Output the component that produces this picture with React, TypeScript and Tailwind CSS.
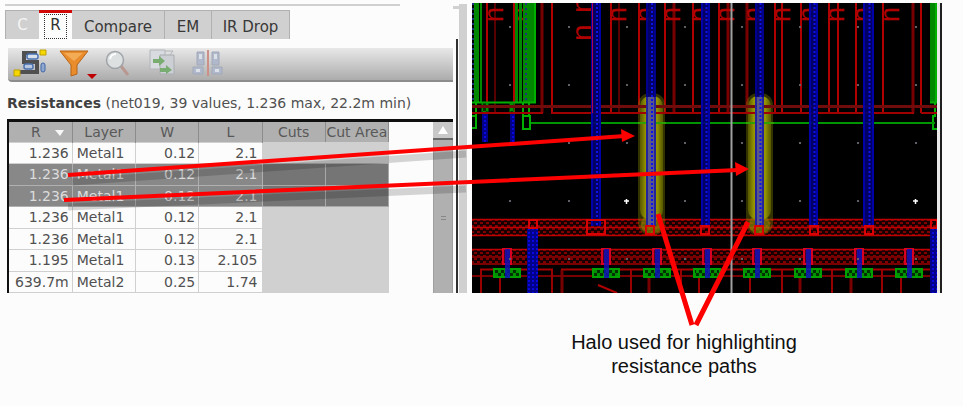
import React from "react";

type Row = { r: string; layer: string; w: string; l: string; selected?: boolean };

const rows: Row[] = [
  { r: "1.236", layer: "Metal1", w: "0.12", l: "2.1" },
  { r: "1.236", layer: "Metal1", w: "0.12", l: "2.1", selected: true },
  { r: "1.236", layer: "Metal1", w: "0.12", l: "2.1", selected: true },
  { r: "1.236", layer: "Metal1", w: "0.12", l: "2.1" },
  { r: "1.236", layer: "Metal1", w: "0.12", l: "2.1" },
  { r: "1.195", layer: "Metal1", w: "0.13", l: "2.105" },
  { r: "639.7m", layer: "Metal2", w: "0.25", l: "1.74" },
];

function Tabs() {
  const tab = "h-full border-r border-t border-[#b0b0b0] bg-[#d0d0d0] pt-[3px] text-[#383838]";
  return (
    <div role="tablist" className="mt-[4px] flex h-[29px] text-[15px] leading-[20px]">
      <button role="tab" className="h-full w-[34px] border-l border-t border-[#b0b0b0] bg-[#d0d0d0] text-[#f4f4f4]">C</button>
      <button role="tab" aria-selected="true" className="h-full w-[33px] border-t-[3px] border-[#d00808] bg-[#fcfcfc] px-[5px] text-[#303030]">
        <span className="block h-[25px] border border-dotted border-[#303030] leading-[21px]">R</span>
      </button>
      <button role="tab" className={tab + " w-[93px]"}>Compare</button>
      <button role="tab" className={tab + " w-[47px]"}>EM</button>
      <button role="tab" className={tab + " w-[78px]"}>IR Drop</button>
    </div>
  );
}

function Toolbar() {
  return (
    <div className="ml-[3px] mt-[9px] flex h-[34px] items-center rounded-bl border-b-2 border-[#8c8c8c] bg-linear-to-b from-[#e8e8e8] via-[#d0d0d0] via-40% to-[#acacac]">
      <button aria-label="Select net" className="ml-[4px] w-[36px]">
        <svg width="36" height="30" viewBox="0 0 36 30">
          <path d="M25 4H12v9h13v10H8" fill="none" stroke="#505050" strokeWidth="4" />
          <rect x="15" y="5" width="11" height="5" rx="2" fill="#d8e0ec" stroke="#4870b0" strokeWidth="1.5" />
          <rect x="12" y="15" width="9" height="5" rx="2" fill="#b8c8e0" stroke="#4870b0" strokeWidth="1.5" />
          <rect x="29" y="14" width="4" height="9" rx="2" fill="#90a8d0" stroke="#4068a8" />
          <path d="M28 1h6v5h-6zM2 21h6v6H2z" fill="#f4d800" stroke="#c0a000" />
        </svg>
      </button>
      <button aria-label="Filter" className="ml-[10px] w-[40px]">
        <svg width="40" height="30" viewBox="0 0 40 30">
          <path d="M2 2h28L19 16v9l-6 2V16Z" fill="#e88c2c" stroke="#b86414" />
          <path d="M6 4h19l-9 8" fill="#f8b868" opacity=".7" />
          <path d="M29 25h10l-5 5Z" fill="#c00000" />
        </svg>
      </button>
      <button aria-label="Search" className="ml-[5px] w-[30px]">
        <svg width="30" height="30" viewBox="0 0 30 30">
          <path d="m18 17 7 9" stroke="#b89890" strokeWidth="3" />
          <circle cx="12" cy="11" r="8.5" fill="#dce0e0" stroke="#a0a4a8" strokeWidth="1.5" />
          <path d="M7 10a6 6 0 0 1 6-5" fill="none" stroke="#fff" strokeWidth="2" />
        </svg>
      </button>
      <button aria-label="Export" className="ml-[14px] w-[32px]">
        <svg width="32" height="30" viewBox="0 0 32 30">
          <path d="M3 1h15v19H3z" fill="#d8dce0" stroke="#b0b4b8" />
          <path d="M13 6h14v19H13z" fill="#ccd0d4" stroke="#a8acb0" />
          <path d="M6 10h6V7l6 5-6 5v-3H6zM13 19h6v-3l6 5-6 4v-2h-6z" fill="#78ac70" />
          <path d="M18 2h8l-3 4" fill="none" stroke="#b0b4b8" />
        </svg>
      </button>
      <button aria-label="Compare sides" className="ml-[13px] w-[32px]">
        <svg width="32" height="30" viewBox="0 0 32 30" fill="#b0b8cc" stroke="#a0a8b8">
          <path d="M5 3h7v13H5zM20 3h7v13h-7zM1 18h10v7H1zM20 18h10v7H20z" />
          <path d="M7 5h3v5H7zM22 5h3v5h-3zM4 20h4v3H4zM23 20h4v3h-4z" fill="#dce0e8" stroke="none" />
          <path d="M16 1v26" stroke="#cc9088" strokeWidth="2" />
        </svg>
      </button>
    </div>
  );
}

function ResultTable() {
  const th = "border-r border-[#8c8c8c] p-0 font-normal";
  return (
    <div className="ml-[2px] mt-[5px] flex h-[174px] overflow-hidden border-l-2 border-t-[3px] border-[#101010]">
      <table className="h-[171px] w-[380px] table-fixed border-collapse text-[14px] leading-[18px] text-[#505050]">
        <thead>
          <tr className="h-[20px] bg-[#b0b0b0] text-[#585858]">
            <th className={th}>
              <span className="ml-[14px]">R</span>
              <svg className="ml-[14px] inline" width="9" height="6" viewBox="0 0 9 6"><path d="M0 0h9L5 6Z" fill="#f8f8f8" /></svg>
            </th>
            <th className={th}>Layer</th>
            <th className={th}>W</th>
            <th className={th}>L</th>
            <th className={th}>Cuts</th>
            <th className={th + " whitespace-nowrap"}>Cut Area</th>
          </tr>
        </thead>
        <tbody>
          {rows.map((row, i) => {
            const cell = row.selected
              ? "border-y border-r border-[#b0b0b0] bg-[#888888] text-[#dcdcdc]"
              : "border-y border-r border-[#d0d0d0]";
            const empty = row.selected
              ? "border-y border-r border-[#a8a8a8] bg-[#757575] p-0"
              : "bg-[#d0d0d0] p-0";
            return (
              <tr key={i}>
                <td className={cell + " py-0 pl-0 pr-[3px] text-right"}>{row.r}</td>
                <td className={cell + " py-0 pl-[4px] pr-0"}>{row.layer}</td>
                <td className={cell + " py-0 pl-0 pr-[3px] text-right"}>{row.w}</td>
                <td className={cell + " py-0 pl-0 pr-[4px] text-right"}>{row.l}</td>
                <td className={empty} />
                <td className={empty} />
              </tr>
            );
          })}
        </tbody>
      </table>
      <div className="ml-auto flex w-[20px] flex-col items-center bg-[#b0b0b0]">
        <svg className="h-[18px] w-full border-b-2 border-[#686868] bg-[#c8c8c8]" viewBox="0 0 20 16"><path d="M10 4l5 8H5Z" fill="#fff" /></svg>
        <div className="w-full grow border-x border-[#a0a0a0] pt-[76px]">
          <div className="mx-auto h-[4px] w-[5px] border-y border-[#888888]" />
        </div>
      </div>
    </div>
  );
}

const wires: [number, number][] = [
  [487, 2], [495, 1], [514, 2], [542, 3], [552, 2], [611, 2], [619, 1], [639, 2], [665, 2], [674, 3],
  [693, 2], [719, 2], [728, 3], [747, 3], [775, 2], [782, 2], [801, 2], [829, 2], [838, 2], [856, 2],
  [883, 2], [913, 3], [921, 2],
];
const letters = [488, 515, 611, 639, 665, 693, 719, 747, 775, 802, 829, 856, 884];
const metal: [number, number][] = [[591, 10], [646, 10], [701, 9], [755, 9], [809, 9], [863, 11]];
const contacts = [507, 606, 657, 707, 757, 808, 859, 909];
const stubs: [number, number][] = [
  [481, 2], [500, 2], [552, 2], [562, 3], [631, 2], [649, 3], [681, 2], [699, 2], [750, 2], [782, 2],
  [800, 3], [832, 2], [851, 3], [882, 2], [901, 2],
];
const gridX = [509, 568, 626, 684, 741, 799, 857, 915];

function LayoutCanvas() {
  return (
    <svg className="h-[290px] w-full bg-black" viewBox="472 3 465 290" preserveAspectRatio="none" role="img" aria-label="Layout with highlighted resistance paths">
      <defs>
        <pattern id="redHatch" width="6" height="6" patternUnits="userSpaceOnUse">
          <rect width="6" height="6" fill="#180000" />
          <path d="M0 0h3v2H0zM3 3h3v2H3z" fill="#800000" />
        </pattern>
        <pattern id="blueHatch" width="4" height="4" patternUnits="userSpaceOnUse">
          <rect width="4" height="4" fill="#000088" />
          <path d="M0 0h2v2H0z" fill="#0808e0" />
        </pattern>
        <pattern id="greenHatch" width="6" height="6" patternUnits="userSpaceOnUse">
          <rect width="6" height="6" fill="#003000" />
          <path d="M0 0h3v3H0zM3 3h3v3H3z" fill="#009000" />
        </pattern>
        <linearGradient id="halo">
          <stop offset="0" stopColor="#808000" stopOpacity=".5" />
          <stop offset=".25" stopColor="#a0a000" stopOpacity=".9" />
          <stop offset=".75" stopColor="#a0a000" stopOpacity=".9" />
          <stop offset="1" stopColor="#808000" stopOpacity=".5" />
        </linearGradient>
      </defs>

      {/* Pin wires and their net labels */}
      {wires.map(([x, w]) => (
        <rect key={x} x={x - w / 2} y="3" width={w} height="110" fill={w === 3 ? "#780000" : "#b00000"} />
      ))}
      <g fill="#b00000" fontFamily="Liberation Sans, Arial, sans-serif" fontSize="27">
        {letters.map((x) => (
          <text key={x} transform={`translate(${x + 15} 22) rotate(-90)`}>n</text>
        ))}
        <text transform="translate(592 41) rotate(-90)" fontSize="30">n</text>
        <text transform="translate(592 13) rotate(-90)" fontSize="30">n</text>
      </g>

      {/* Green cell boundary */}
      <path d="M474 3h5v99h-5zM480 3h2v99h-2zM515 3h3v99h-3zM519 3h3v99h-3zM523 3h11v99h-11zM930 3h7v99h-7z" fill="#008800" />
      <path d="M472 102.500h63V3M523 102v27h7v-13h-7M529 103v13M472 116h4v12h-4M476 103v13M930 102.500h6V3M935 103v13h-2v13h4" fill="none" stroke="#00b000" strokeWidth="2" />
      <path d="M473 3v99M526 3v99" stroke="#203080" strokeWidth="2" strokeDasharray="2 3" />
      <path d="M531 123h404" stroke="#009400" strokeWidth="2" />
      <rect x="482" y="103" width="6" height="10" fill="url(#greenHatch)" stroke="#009000" />
      <rect x="510" y="103" width="4" height="10" fill="url(#greenHatch)" stroke="#009000" />
      <path d="M482 113h6v29h-6zM510 113h5v29h-5z" fill="url(#blueHatch)" />

      {/* Supply rails */}
      <path d="M472 219h465v17H472zM472 249h465v16H472z" fill="url(#redHatch)" />
      <path d="M472 219.500h465M472 227.500h465M472 235.500h465M472 249.500h465" stroke="#c00000" strokeWidth="1.500" />
      <path d="M472 257h465M472 264h465M472 276h465" stroke="#780000" strokeWidth="2" />
      <path d="M480 269.500h73M561 269.500h376" stroke="#a80000" strokeWidth="2" />
      {stubs.map(([x, w]) => (
        <rect key={x} x={x - w / 2} y="270" width={w} height="23" fill={w === 3 ? "#780000" : "#980000"} />
      ))}
      <path d="m598 285 19 8" stroke="#b00000" strokeWidth="2" />

      {/* Highlighted paths */}
      {[638, 746].map((x) => (
        <g key={x}>
          <rect x={x} y="93" width="27" height="142" rx="12" fill="#808000" opacity=".4" />
          <rect x={x + 2} y="96" width="23" height="124" rx="10" fill="url(#halo)" />
          <rect x={x + 3} y="216" width="21" height="17" rx="8" fill="#909000" opacity=".5" />
        </g>
      ))}

      <path d="M472 106.500h465" stroke="#700c0c" strokeWidth="3" />
      <path d="M472 113h71M551 113h363M921 113h16" stroke="#a00000" strokeWidth="2" />
      <path d="M638 123h28M746 123h28" stroke="#30a000" strokeWidth="2" />

      {metal.map(([x, w]) => {
        const lit = x === 646 || x === 755;
        return (
          <g key={x}>
            <rect x={x} y="3" width={w} height="223" fill="#000070" opacity=".9" />
            {lit && <rect x={x} y="97" width={w} height="129" fill="#58588c" />}
            <path d={`M${x + 1} 3v223M${x + w - 1} 3v223`} stroke="#0000a8" strokeWidth="2" opacity={lit ? 0.6 : 1} />
            <path d={`M${x + w / 2 + 1} 3v223`} stroke="#1010e8" strokeWidth="2" strokeDasharray="2 2" />
          </g>
        );
      })}
      <path d="M592.500 3v110" stroke="#b00050" />
      <path d="M527 229h11v64h-11zM930 228h7v65h-7z" fill="url(#blueHatch)" />
      <g fill="none" stroke="#d80000" strokeWidth="2">
        <path d="M529 220h8v8h-8zM587 220h18v14h-18zM931 220h6v8h-6z" />
        {[650, 705, 759, 814, 869].map((x) => (
          <rect key={x} x={x - 4} y="226" width="8" height="8" />
        ))}
      </g>

      {contacts.map((x) => (
        <g key={x}>
          <rect x={x - 13} y="269" width="26" height="8" fill="url(#greenHatch)" stroke="#00a000" strokeWidth="2" />
          <rect x={x - 4} y="249" width="8" height="15" fill="#500020" stroke="#d80020" strokeWidth="2" />
          <rect x={x - 2} y="249" width="5" height="29" fill="#1010b8" opacity=".85" />
        </g>
      ))}

      <path d="M731.500 3v290" stroke="#a0a0a0" strokeWidth="2" />
      <g fill="#606068">
        {[26, 84, 142, 200, 258].map((y) => gridX.map((x) => <rect key={`${x}-${y}`} x={x} y={y} width="2" height="2" />))}
      </g>
      <path d="M624 201h5M626.500 199v5M913 201h5M915.500 199v5" stroke="#fff" strokeWidth="1.500" />
    </svg>
  );
}

function Callouts() {
  return (
    <svg className="pointer-events-none absolute left-0 top-0 h-[406px] w-full" viewBox="0 0 963 406" preserveAspectRatio="none" fill="none" aria-hidden="true">
      <g stroke="#000" strokeOpacity=".16" strokeWidth="7">
        <path d="M72 182 466 154M68 207l398-18" />
      </g>
      <g stroke="#ff0000" strokeWidth="4">
        <path d="M68 175 625 136M64 200l674-30" />
        <path d="m658 214 34 111M748 222l-52 103" strokeWidth="5" />
      </g>
      <path d="m621 129 14 7-13 6ZM735 162l14 7-13 7Z" fill="#ff0000" />
    </svg>
  );
}

export default function App() {
  return (
    <main className="relative grid min-h-[406px] grid-cols-[467fr_496fr] bg-[#fcfcfc] font-['DejaVu_Sans',sans-serif]">
      <section className="flex h-[293px] pl-[5px]">
        <div className="min-w-0 grow pt-[4px]">
          <div className="mr-[53px] h-[2px] bg-[#d0d0d0]" />
          <Tabs />
          <Toolbar />
          <h2 className="ml-[2px] mt-[11px] whitespace-nowrap text-[14px] font-normal leading-[21px] text-[#505050]">
            <b className="text-[#404040]">Resistances</b> (net019, 39 values, 1.236 max, 22.2m min)
          </h2>
          <ResultTable />
        </div>
        <div className="mt-[6px] h-[3px] w-[6px] shrink-0 bg-[#d0d0d0]" />
        <div className="mt-[4px] w-[8px] shrink-0 bg-[#d0d0d0] pt-[35px]">
          <div className="-ml-[3px] h-full w-[2px] bg-[#303030]" />
        </div>
      </section>
      <section className="pl-[5px] pr-[21px] pt-[3px]">
        <div className="flex h-[290px] border-r-2 border-[#202020]">
          <div className="min-w-0 grow border-r-[3px] border-[#e8e8e8]"><LayoutCanvas /></div>
        </div>
        <p className="mt-[37px] pr-[46px] text-center font-['Liberation_Sans',Arial,sans-serif] text-[20px] leading-[24px] text-[#101010]">
          Halo used for highlighting
          <br />
          resistance paths
        </p>
      </section>
      <Callouts />
    </main>
  );
}
